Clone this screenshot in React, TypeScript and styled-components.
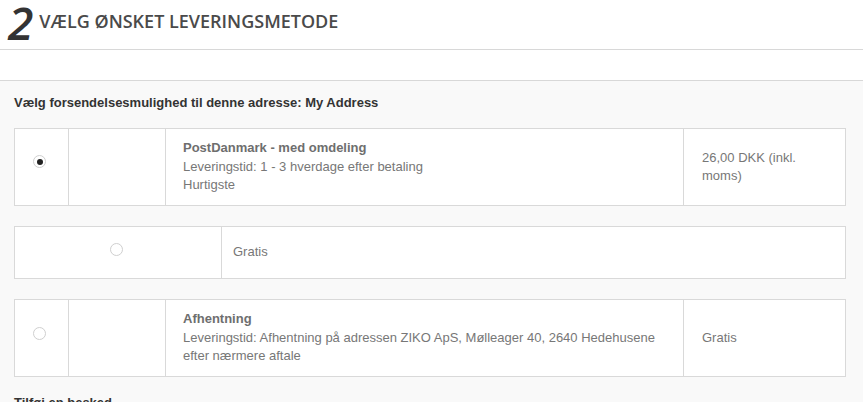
import React from 'react';
import styled, { createGlobalStyle } from 'styled-components';

const GlobalStyle = createGlobalStyle`
  html, body {
    margin: 0;
    padding: 0;
    background: #f9f9f9;
    overflow: hidden;
  }
`;

const Page = styled.div`
  width: 863px;
  height: 402px;
  overflow: hidden;
  background: #f9f9f9;
  font-family: "Liberation Sans", Arial, sans-serif;
`;

const StepHeader = styled.header`
  display: flex;
  align-items: flex-end;
  height: 50px;
  box-sizing: border-box;
  padding: 0 0 4px 8px;
  background: #fff;
  border-bottom: 1px solid #d8d8d8;
`;

const StepNumber = styled.span`
  font-family: "Open Sans", sans-serif;
  font-style: italic;
  font-weight: 600;
  font-size: 46px;
  line-height: 46px;
  color: #333;
  margin-right: 6px;
`;

const StepTitle = styled.h2`
  margin: 0 0 12px;
  font-family: "Open Sans", sans-serif;
  font-weight: 600;
  font-size: 18px;
  line-height: 24px;
  color: #4a4a4a;
`;

const Spacer = styled.div`
  height: 30px;
  background: #fff;
  border-bottom: 1px solid #d8d8d8;
`;

const Content = styled.main`
  padding: 14px 17px 0 14px;
`;

const Intro = styled.h3`
  margin: 0 0 17px;
  font-size: 13px;
  line-height: 16px;
  font-weight: bold;
  color: #333;
`;

const Options = styled.div`
  display: flex;
  flex-direction: column;
  gap: 20px;
`;

const OptionRow = styled.div<{ $cols: string; $height: number }>`
  display: grid;
  grid-template-columns: ${(p) => p.$cols};
  height: ${(p) => p.$height}px;
  box-sizing: border-box;
  background: #fff;
  border: 1px solid #d9d9d9;
`;

const Cell = styled.div<{ $center?: boolean; $pad?: number }>`
  display: flex;
  flex-direction: column;
  justify-content: center;
  align-items: ${(p) => (p.$center ? 'center' : 'flex-start')};
  padding: 0 18px 0 ${(p) => p.$pad ?? 17}px;
  border-left: 1px solid #d9d9d9;
  font-size: 13px;
  line-height: 18.5px;
  color: #777;
  &:first-child {
    border-left: none;
  }
`;

const Radio = styled.span<{ $checked?: boolean; $lift: number }>`
  position: relative;
  width: 13px;
  height: 13px;
  border-radius: 50%;
  border: 1px solid #cfcfcf;
  background: #fff;
  box-sizing: border-box;
  margin: -${(p) => p.$lift}px 0 0 -3px;
  &::after {
    content: '';
    display: ${(p) => (p.$checked ? 'block' : 'none')};
    position: absolute;
    left: 2.5px;
    top: 2.5px;
    width: 6px;
    height: 6px;
    border-radius: 50%;
    background: #222;
  }
`;

const Name = styled.strong`
  font-weight: bold;
  color: #6e6e6e;
`;

const Line = styled.span``;

const AddMessage = styled.h3`
  margin: 18px 0 0;
  font-size: 13px;
  line-height: 16px;
  font-weight: bold;
  color: #333;
`;

const wide = '53px 97px 1fr 162px';

const App = () => {
  return (
    <Page>
      <GlobalStyle />
      <StepHeader>
        <StepNumber>2</StepNumber>
        <StepTitle>VÆLG ØNSKET LEVERINGSMETODE</StepTitle>
      </StepHeader>
      <Spacer />
      <Content>
        <Intro>Vælg forsendelsesmulighed til denne adresse: My Address</Intro>
        <Options>
          <OptionRow $cols={wide} $height={78}>
            <Cell $center>
              <Radio $checked $lift={11} />
            </Cell>
            <Cell />
            <Cell>
              <Name>PostDanmark - med omdeling</Name>
              <Line>Leveringstid: 1 - 3 hverdage efter betaling</Line>
              <Line>Hurtigste</Line>
            </Cell>
            <Cell $pad={18}>
              <Line>26,00 DKK (inkl. moms)</Line>
            </Cell>
          </OptionRow>
          <OptionRow $cols="206px 1fr" $height={53}>
            <Cell $center>
              <Radio $lift={6} />
            </Cell>
            <Cell $pad={11}>
              <Line>Gratis</Line>
            </Cell>
          </OptionRow>
          <OptionRow $cols={wide} $height={78}>
            <Cell $center>
              <Radio $lift={9} />
            </Cell>
            <Cell />
            <Cell>
              <Name>Afhentning</Name>
              <Line>Leveringstid: Afhentning på adressen ZIKO ApS, Mølleager 40, 2640 Hedehusene</Line>
              <Line>efter nærmere aftale</Line>
            </Cell>
            <Cell $pad={18}>
              <Line>Gratis</Line>
            </Cell>
          </OptionRow>
        </Options>
        <AddMessage>Tilføj en besked</AddMessage>
      </Content>
    </Page>
  );
};

export default App;
